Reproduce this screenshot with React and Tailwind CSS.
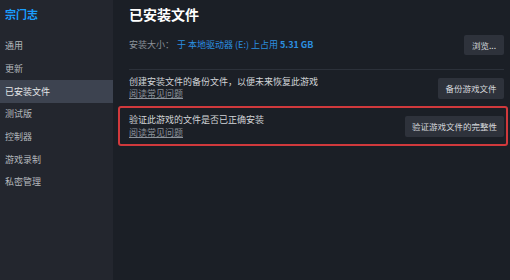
import React from "react";

const font = { fontFamily: '"Noto Sans CJK SC", "Noto Sans", sans-serif' };

const navItems = ["通用", "更新", "已安装文件", "测试版", "控制器", "游戏录制", "私密管理"];

function Btn({ children, className = "" }) {
  return (
    <button className={`bg-[#2e323b] text-[#d6d8db] text-[8.5px] rounded-[2px] flex items-center justify-center ${className}`}>
      {children}
    </button>
  );
}

export default function App() {
  return (
    <div className="flex w-[510px] h-[280px] bg-[#1b1f26] overflow-hidden" style={font}>
      {/* Sidebar */}
      <div className="w-[113px] shrink-0 bg-[#23262e] flex flex-col">
        <div className="pl-[5px] pt-[7px] h-[34.67px] text-[11px] leading-[14px] font-bold text-[#1a9fff]">宗门志</div>
        {navItems.map((item) => (
          <div
            key={item}
            className={`h-[22.67px] flex items-center pl-[5px] text-[9px] ${item === "已安装文件" ? "bg-[#3d4350] text-[#e6e8ea]" : "text-[#b4b8bd]"}`}
          >
            {item}
          </div>
        ))}
      </div>

      {/* Main */}
      <div className="flex-1 pl-[16px] pr-[6px] flex flex-col">
        <div className="pt-[4px] h-[35px] text-[14px] leading-[20px] font-bold text-white">已安装文件</div>

        <div className="flex items-center justify-between h-[20px]">
          <div className="text-[9px] flex items-center">
            <span className="text-[#8b929a] w-[48px]">安装大小：</span>
            <span className="text-[#2b8fe0]">于 本地驱动器 (E:) 上占用 <span className="font-bold">5.31 GB</span></span>
          </div>
          <Btn className="w-[40px] h-[20px]">浏览...</Btn>
        </div>

        <div className="mt-[14px] h-px bg-[#2c313a]" />

        <div className="flex items-center justify-between h-[36px]">
          <div className="text-[9px] leading-[12px]">
            <div className="text-[#d2d5d8]">创建安装文件的备份文件，以便未来恢复此游戏</div>
            <div className="text-[#8b929a] underline">阅读常见问题</div>
          </div>
          <Btn className="w-[66px] h-[21px]">备份游戏文件</Btn>
        </div>

        <div className="-ml-[11px] -mr-[4px] h-[40px] border-2 border-[#d0393c] rounded-[3px] pl-[9px] pr-[2px] flex items-center justify-between">
          <div className="text-[9px] leading-[13px]">
            <div className="text-[#d2d5d8]">验证此游戏的文件是否已正确安装</div>
            <div className="text-[#8b929a] underline">阅读常见问题</div>
          </div>
          <Btn className="w-[99px] h-[21px]">验证游戏文件的完整性</Btn>
        </div>
      </div>
    </div>
  );
}
